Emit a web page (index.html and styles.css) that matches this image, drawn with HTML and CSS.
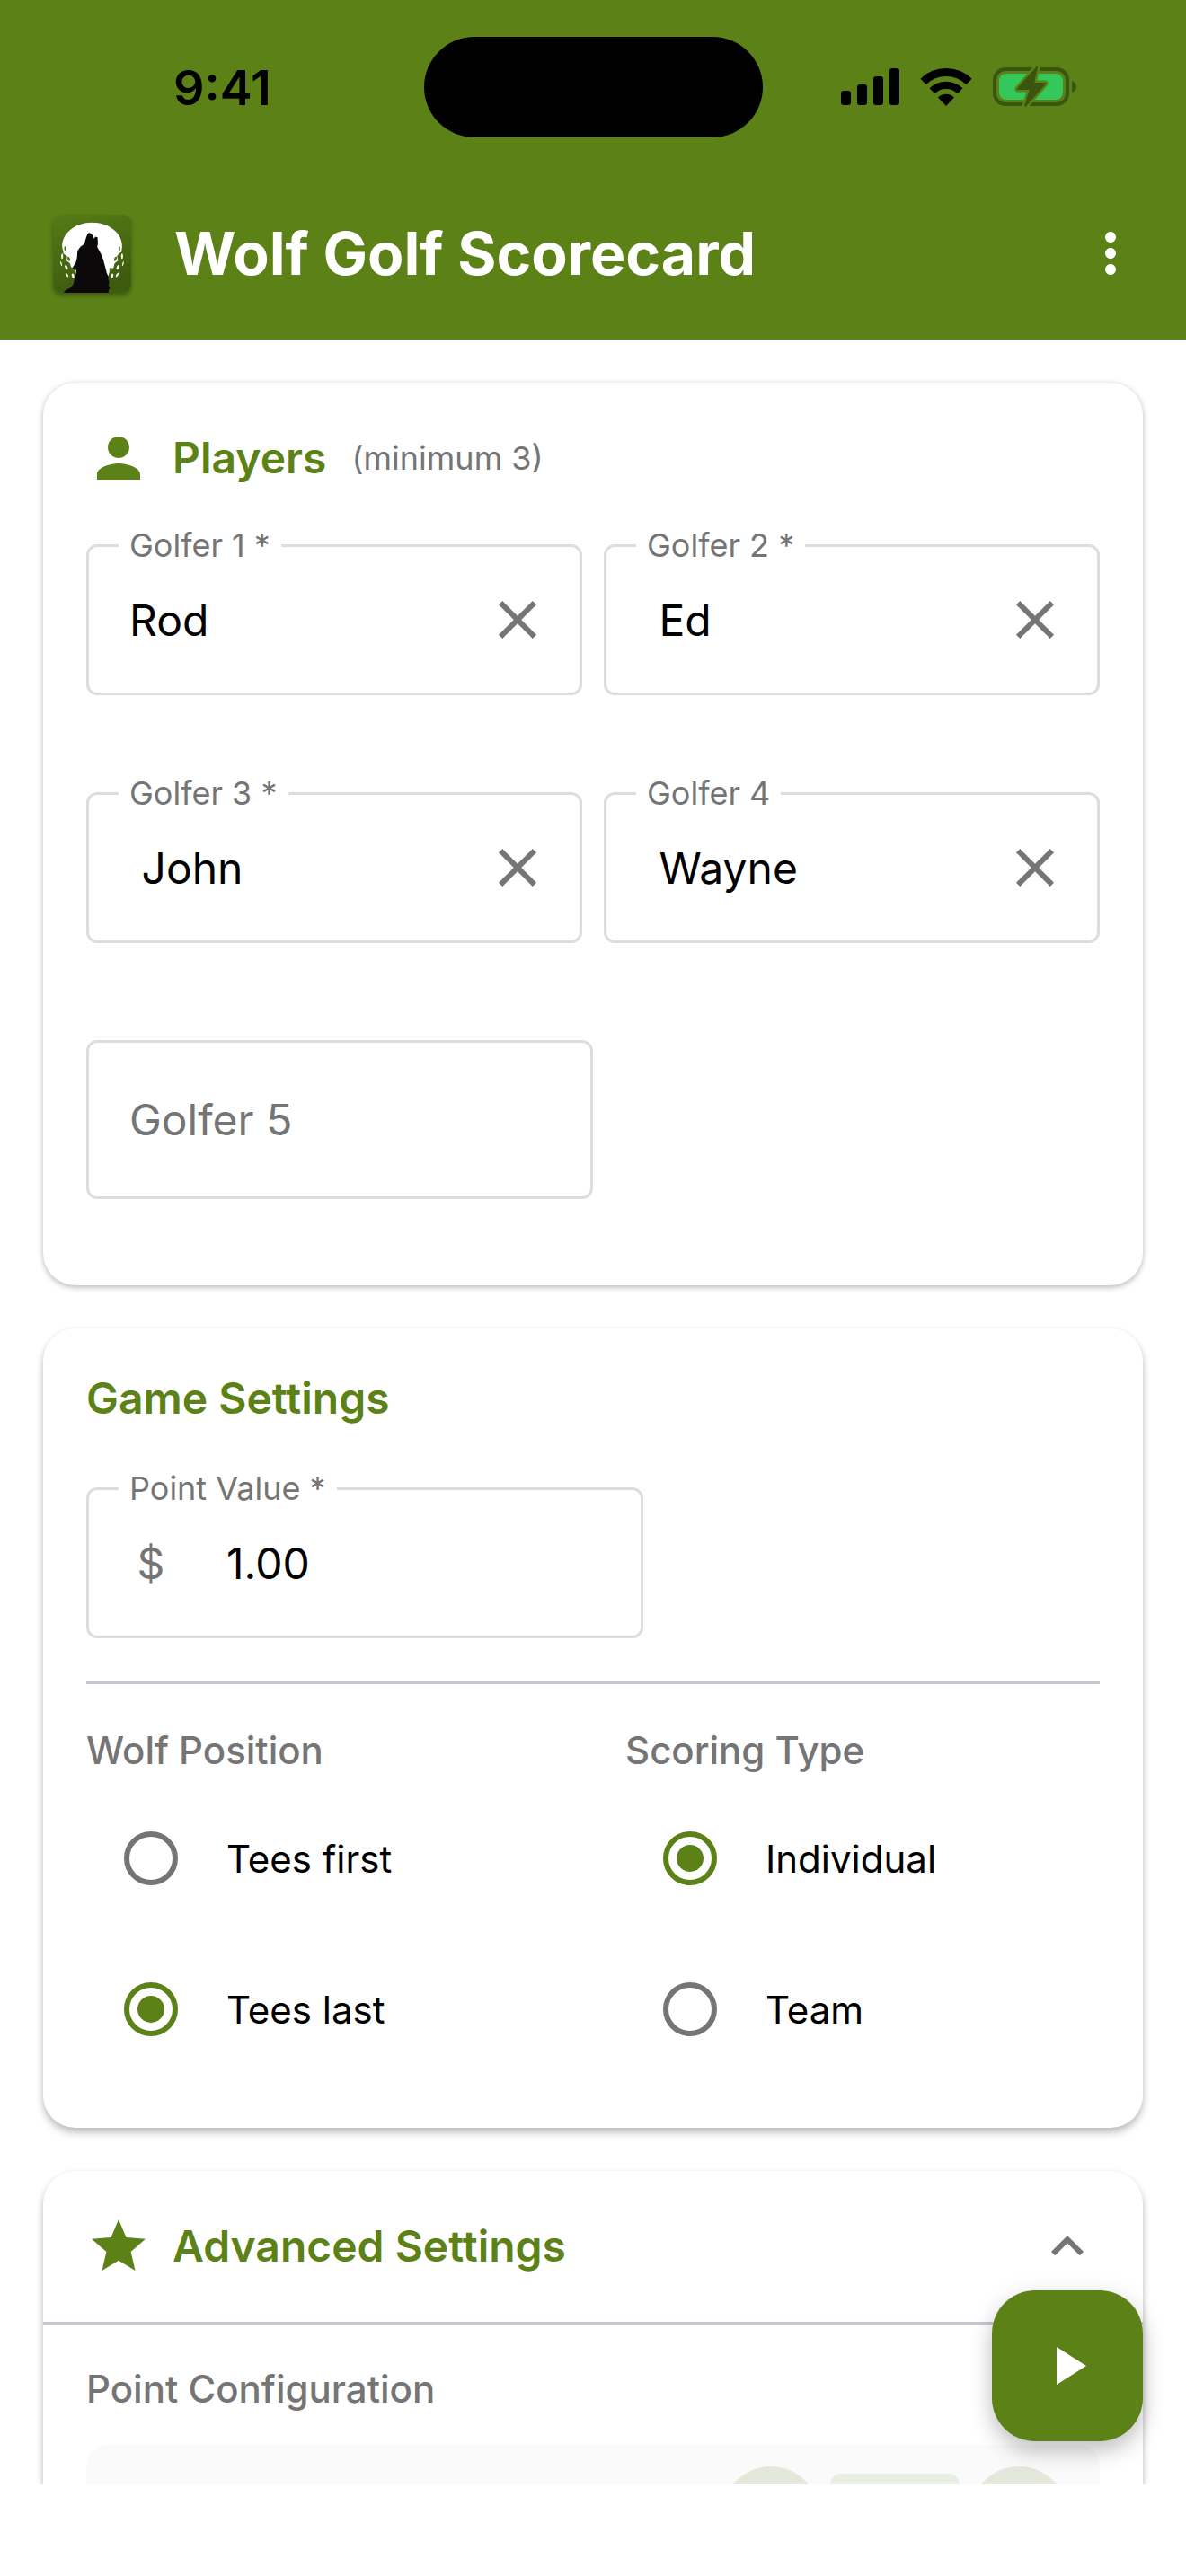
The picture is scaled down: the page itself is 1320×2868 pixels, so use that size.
FILE: index.html
```html
<!DOCTYPE html>
<html lang="en">
<head>
  <meta charset="UTF-8" />
  <meta name="viewport" content="width=device-width, initial-scale=1" />
  <title>Wolf Golf Scorecard</title>
  <link rel="stylesheet" href="styles.css">
</head>
<body>

  <header class="top">
    <div class="status-bar">
      <span class="time">9:41</span>
      <div class="island"></div>
      <div class="status-icons">
        <svg width="65" height="42" viewBox="0 0 65 42">
          <rect x="0" y="25" width="11" height="16" rx="3"/>
          <rect x="18" y="18" width="11" height="23" rx="3"/>
          <rect x="36" y="9" width="11" height="32" rx="3"/>
          <rect x="54" y="0" width="11" height="41" rx="3"/>
        </svg>
        <svg width="58" height="42" viewBox="0 0 58 42">
          <path d="M3.6 14.9a36.4 36.4 0 0 1 50.8 0" fill="none" stroke="#000" stroke-width="9"/>
          <path d="M13.4 25.2a22.3 22.3 0 0 1 31.2 0" fill="none" stroke="#000" stroke-width="8.4"/>
          <path d="M29 42L20 32.4a13 13 0 0 1 18 0z"/>
        </svg>
        <svg width="94" height="46" viewBox="0 -1 94 46">
          <rect x="2" y="2" width="81" height="39" rx="12" fill="none" stroke="#3b5410" stroke-width="4"/>
          <rect x="7" y="7" width="71" height="29" rx="8" fill="#34c759"/>
          <path d="M88 15q5 2 5 6.500t-5 6.500z" fill="#3b5410"/>
          <path d="M49 0L28 24h14l-6 19 22-25H45z" fill="#5c8217" stroke="#5c8217" stroke-width="7" stroke-linejoin="round"/>
          <path d="M49 0L28 24h14l-6 19 22-25H45z" fill="#3b5410" stroke="#3b5410" stroke-width="2" stroke-linejoin="round"/>
        </svg>
      </div>
    </div>

    <div class="app-bar">
      <svg class="logo" viewBox="57 87 258 258">
        <defs>
          <linearGradient id="turf" x1="0" y1="0" x2="0.3" y2="1">
            <stop offset="0" stop-color="#557b18"/>
            <stop offset="1" stop-color="#3f5b0f"/>
          </linearGradient>
        </defs>
        <rect x="57" y="87" width="258" height="258" fill="url(#turf)"/>
        <path d="M87 192C87 146 132 113 186 113s99 33 99 79l-2 18-9 6-6 8 4 14-12 10-3 14-12 8-8 26H136l-8-28-12-8-3-12-12-10 3-14-12-8z" fill="#fff"/>
        <g fill="#4d7115">
          <ellipse cx="97" cy="199" rx="3" ry="8"/>
          <ellipse cx="276" cy="199" rx="3" ry="8"/>
          <ellipse cx="109" cy="233" rx="4" ry="8" transform="rotate(-20 109 233)"/>
          <ellipse cx="263" cy="233" rx="4" ry="8" transform="rotate(20 263 233)"/>
          <ellipse cx="125" cy="269" rx="5" ry="7"/>
          <ellipse cx="248" cy="269" rx="5" ry="7"/>
        </g>
        <g fill="#fff">
          <ellipse cx="87" cy="224" rx="3" ry="9"/>
          <ellipse cx="285" cy="224" rx="3" ry="9"/>
          <ellipse cx="84" cy="249" rx="2" ry="8" transform="rotate(-15 84 249)"/>
          <ellipse cx="288" cy="249" rx="2" ry="8" transform="rotate(15 288 249)"/>
          <ellipse cx="101" cy="261" rx="4" ry="8" transform="rotate(-25 101 261)"/>
          <ellipse cx="271" cy="261" rx="4" ry="8" transform="rotate(25 271 261)"/>
          <ellipse cx="103" cy="286" rx="3" ry="8" transform="rotate(-30 103 286)"/>
          <ellipse cx="269" cy="286" rx="3" ry="8" transform="rotate(30 269 286)"/>
          <ellipse cx="123" cy="289" rx="4" ry="8" transform="rotate(-15 123 289)"/>
          <ellipse cx="252" cy="289" rx="4" ry="8" transform="rotate(15 252 289)"/>
        </g>
        <path d="M92 345l6-8 16-8 10-12 4-18 4-14 2-14-6-4-8-3 12-18 4-16 2-24 10-14 12-8 4-14 6-18 4-5 6 1 8 7 5 12 3-7 8 2 1 20-2 12 12 22 8 20 6 22 5 20 6 14-1 8 4 10-3 8 4 12-4 8 1 12-4 15z" fill="#0b0909"/>
      </svg>
      <h1>Wolf Golf Scorecard</h1>
      <button class="icon-btn menu-btn" aria-label="Menu">
        <svg class="icon" viewBox="0 0 24 24"><path d="M12 8c1.100 0 2-.9 2-2s-.9-2-2-2-2 .9-2 2 .9 2 2 2zm0 2c-1.100 0-2 .9-2 2s.9 2 2 2 2-.9 2-2-.9-2-2-2zm0 6c-1.100 0-2 .9-2 2s.9 2 2 2 2-.9 2-2-.9-2-2-2z"/></svg>
      </button>
    </div>
  </header>

  <main>
    <section class="card players">
      <div class="card-title">
        <svg class="icon" viewBox="0 0 24 24"><path d="M12 12c2.210 0 4-1.790 4-4s-1.790-4-4-4-4 1.790-4 4 1.790 4 4 4zm0 2c-2.670 0-8 1.340-8 4v2h16v-2c0-2.660-5.330-4-8-4z"/></svg>
        <h2>Players</h2>
        <span class="hint">(minimum 3)</span>
      </div>

      <div class="player-grid">
        <div class="field">
          <label for="golfer1">Golfer 1 *</label>
          <input type="text" id="golfer1" value="Rod">
          <button class="icon-btn" aria-label="Clear golfer 1">
            <svg class="icon" viewBox="0 0 24 24"><path d="M19 6.410L17.590 5 12 10.590 6.410 5 5 6.410 10.590 12 5 17.590 6.410 19 12 13.410 17.590 19 19 17.590 13.410 12z"/></svg>
          </button>
        </div>
        <div class="field">
          <label for="golfer2">Golfer 2 *</label>
          <input type="text" id="golfer2" value=" Ed">
          <button class="icon-btn" aria-label="Clear golfer 2">
            <svg class="icon" viewBox="0 0 24 24"><path d="M19 6.410L17.590 5 12 10.590 6.410 5 5 6.410 10.590 12 5 17.590 6.410 19 12 13.410 17.590 19 19 17.590 13.410 12z"/></svg>
          </button>
        </div>
        <div class="field">
          <label for="golfer3">Golfer 3 *</label>
          <input type="text" id="golfer3" value=" John">
          <button class="icon-btn" aria-label="Clear golfer 3">
            <svg class="icon" viewBox="0 0 24 24"><path d="M19 6.410L17.590 5 12 10.590 6.410 5 5 6.410 10.590 12 5 17.590 6.410 19 12 13.410 17.590 19 19 17.590 13.410 12z"/></svg>
          </button>
        </div>
        <div class="field">
          <label for="golfer4">Golfer 4</label>
          <input type="text" id="golfer4" value=" Wayne">
          <button class="icon-btn" aria-label="Clear golfer 4">
            <svg class="icon" viewBox="0 0 24 24"><path d="M19 6.410L17.590 5 12 10.590 6.410 5 5 6.410 10.590 12 5 17.590 6.410 19 12 13.410 17.590 19 19 17.590 13.410 12z"/></svg>
          </button>
        </div>
      </div>
      <div class="field field-empty">
        <input type="text" id="golfer5" placeholder="Golfer 5" aria-label="Golfer 5">
      </div>
    </section>

    <section class="card raised settings">
      <h2>Game Settings</h2>

      <div class="field field-point">
        <label for="pointValue">Point Value *</label>
        <span class="prefix">$</span>
        <input type="text" id="pointValue" inputmode="decimal" value="1.00">
      </div>

      <hr>

      <div class="options">
        <div role="radiogroup" aria-labelledby="wolfPosition">
          <h3 id="wolfPosition">Wolf Position</h3>
          <label class="radio"><input type="radio" name="position"> Tees first</label>
          <label class="radio"><input type="radio" name="position" checked> Tees last</label>
        </div>
        <div role="radiogroup" aria-labelledby="scoringType">
          <h3 id="scoringType">Scoring Type</h3>
          <label class="radio"><input type="radio" name="scoring" checked> Individual</label>
          <label class="radio"><input type="radio" name="scoring"> Team</label>
        </div>
      </div>
    </section>

    <section class="card raised advanced">
      <div class="card-title">
        <svg class="icon" viewBox="0 0 24 24"><path d="M12 17.270L18.180 21l-1.640-7.030L22 9.240l-7.190-.61L12 2 9.190 8.630 2 9.240l5.460 4.730L5.820 21z"/></svg>
        <h2>Advanced Settings</h2>
        <button class="icon-btn" aria-label="Collapse">
          <svg class="icon" viewBox="0 0 24 24"><path d="M12 8l-6 6 1.410 1.410L12 10.830l4.590 4.580L18 14z"/></svg>
        </button>
      </div>
      <hr>
      <div class="advanced-body">
        <h3>Point Configuration</h3>
        <div class="stepper-row">
          <button class="step-btn" aria-label="Decrease"></button>
          <input class="step-value" type="text" aria-label="Points">
          <button class="step-btn" aria-label="Increase"></button>
        </div>
      </div>
    </section>
  </main>

  <button class="fab" aria-label="Start game">
    <svg class="icon" viewBox="0 0 24 24"><path d="M8 5v14l11-7z"/></svg>
  </button>

</body>
</html>
```

FILE: styles.css
```css
* {
  box-sizing: border-box;
}

body {
  margin: 0;
  height: 100vh;
  padding-bottom: 102px;
  display: flex;
  flex-direction: column;
  font-family: Inter, "Liberation Sans", sans-serif;
  background: #fff;
  color: #000;
}

h1, h2, h3 {
  margin: 0;
}

input, button {
  font-family: inherit;
  font-size: 48px;
}

.icon {
  display: block;
  flex: none;
  width: 72px;
  height: 72px;
  fill: currentColor;
}

.icon-btn {
  flex: none;
  padding: 36px;
  border: none;
  background: none;
  color: #757575;
  cursor: pointer;
}

/* header */
.top {
  flex: none;
  background: #5c8217;
}

.status-bar {
  display: grid;
  grid-template-columns: 1fr 377px 1fr;
  align-items: center;
  padding: 41px 0 33px;
}

.time {
  padding-left: 193px;
  font-size: 54px;
  font-weight: 600;
}

.island {
  height: 112px;
  border-radius: 56px;
  background: #000;
}

.status-icons {
  display: flex;
  align-items: center;
  justify-content: flex-end;
  gap: 23px;
  padding-right: 121px;
}

.app-bar {
  display: flex;
  align-items: center;
  height: 192px;
  padding: 0 12px 0 59px;
}

.logo {
  width: 87px;
  height: 87px;
  margin-right: 48px;
  border-radius: 9px;
  box-shadow: 0 3px 5px rgba(0, 0, 0, 0.3);
}

.app-bar h1 {
  flex: 1;
  color: #fff;
  font-size: 66px;
  font-weight: 700;
}

.menu-btn {
  color: #fff;
}

/* cards */
main {
  flex: 1;
  min-height: 0;
  overflow-y: auto;
  scrollbar-width: none;
  display: flex;
  flex-direction: column;
  gap: 48px;
  padding: 48px;
}

.card {
  flex: none;
  border-radius: 36px;
  background: #fff;
  box-shadow: 0 3px 6px rgba(0, 0, 0, 0.2), 0 0 6px rgba(0, 0, 0, 0.1);
}

.raised {
  box-shadow: 0 6px 9px rgba(0, 0, 0, 0.22), 0 1px 6px rgba(0, 0, 0, 0.08);
}

.card-title {
  display: flex;
  align-items: center;
  color: #5c8217;
}

.card-title .icon {
  margin-right: 24px;
}

h2 {
  color: #5c8217;
  font-size: 48px;
  font-weight: 600;
  line-height: 72px;
}

h3 {
  color: #757575;
  font-size: 42px;
  font-weight: 500;
  line-height: 60px;
}

hr {
  height: 3px;
  margin: 0;
  border: none;
  background: #cac4d0;
}

.players {
  padding: 48px 48px 96px;
}

.hint {
  margin-left: 28px;
  color: #757575;
  font-size: 36px;
}

.player-grid {
  display: grid;
  grid-template-columns: repeat(2, minmax(0, 1fr));
  gap: 108px 24px;
  margin: 60px 0 108px;
}

.field {
  position: relative;
  display: flex;
  align-items: center;
  height: 168px;
  border: 3px solid #ddd;
  border-radius: 12px;
}

.field label {
  position: absolute;
  top: -24px;
  left: 33px;
  padding: 0 12px;
  background: #fff;
  color: #757575;
  font-size: 36px;
  line-height: 44px;
}

.field input {
  flex: 1;
  min-width: 0;
  height: 100%;
  padding: 0 0 0 45px;
  border: none;
  outline: none;
  background: none;
  color: #000;
}

.field input::placeholder {
  color: #757575;
  opacity: 1;
}

.field .icon-btn {
  padding: 33px;
}

.field-empty {
  width: 50%;
  height: 177px;
}

/* game settings */
.settings {
  padding: 42px 48px 48px;
}

.field-point {
  width: 55%;
  margin: 63px 0 48px;
}

.prefix {
  width: 138px;
  text-align: center;
  color: #757575;
  font-size: 48px;
}

.field-point .prefix + input {
  padding-left: 15px;
}

.options {
  display: grid;
  grid-template-columns: 1fr 1fr;
  column-gap: 72px;
  padding-top: 44px;
}

.options h3 {
  margin-bottom: 6px;
}

.radio {
  display: flex;
  align-items: center;
  gap: 54px;
  height: 168px;
  padding-left: 42px;
  font-size: 42px;
}

.radio input {
  appearance: none;
  display: grid;
  place-content: center;
  width: 60px;
  height: 60px;
  margin: 0;
  border: 6px solid #757575;
  border-radius: 50%;
}

.radio input:checked {
  border-color: #5c8217;
}

.radio input:checked::before {
  content: "";
  width: 30px;
  height: 30px;
  border-radius: 50%;
  background: #5c8217;
}

/* advanced settings */
.advanced .card-title {
  height: 168px;
  padding: 0 12px 0 48px;
}

.advanced .card-title h2 {
  flex: 1;
}

.advanced .icon-btn .icon {
  margin: 0;
}

.advanced-body {
  padding: 42px 48px 48px;
}

.stepper-row {
  display: flex;
  align-items: center;
  justify-content: flex-end;
  gap: 12px;
  margin-top: 32px;
  padding: 24px 36px;
  border-radius: 24px;
  background: #fafafa;
}

.step-btn {
  width: 108px;
  height: 108px;
  border: none;
  border-radius: 50%;
  background: #e4e8da;
}

.step-value {
  width: 144px;
  height: 92px;
  border: none;
  border-radius: 12px;
  background: #e8eee2;
  text-align: center;
}

.fab {
  position: fixed;
  right: 48px;
  bottom: 150px;
  padding: 48px;
  border: none;
  border-radius: 48px;
  background: #5c8217;
  color: #fff;
  box-shadow: 0 12px 24px rgba(0, 0, 0, 0.2), 0 3px 30px rgba(0, 0, 0, 0.08);
  cursor: pointer;
}
```
